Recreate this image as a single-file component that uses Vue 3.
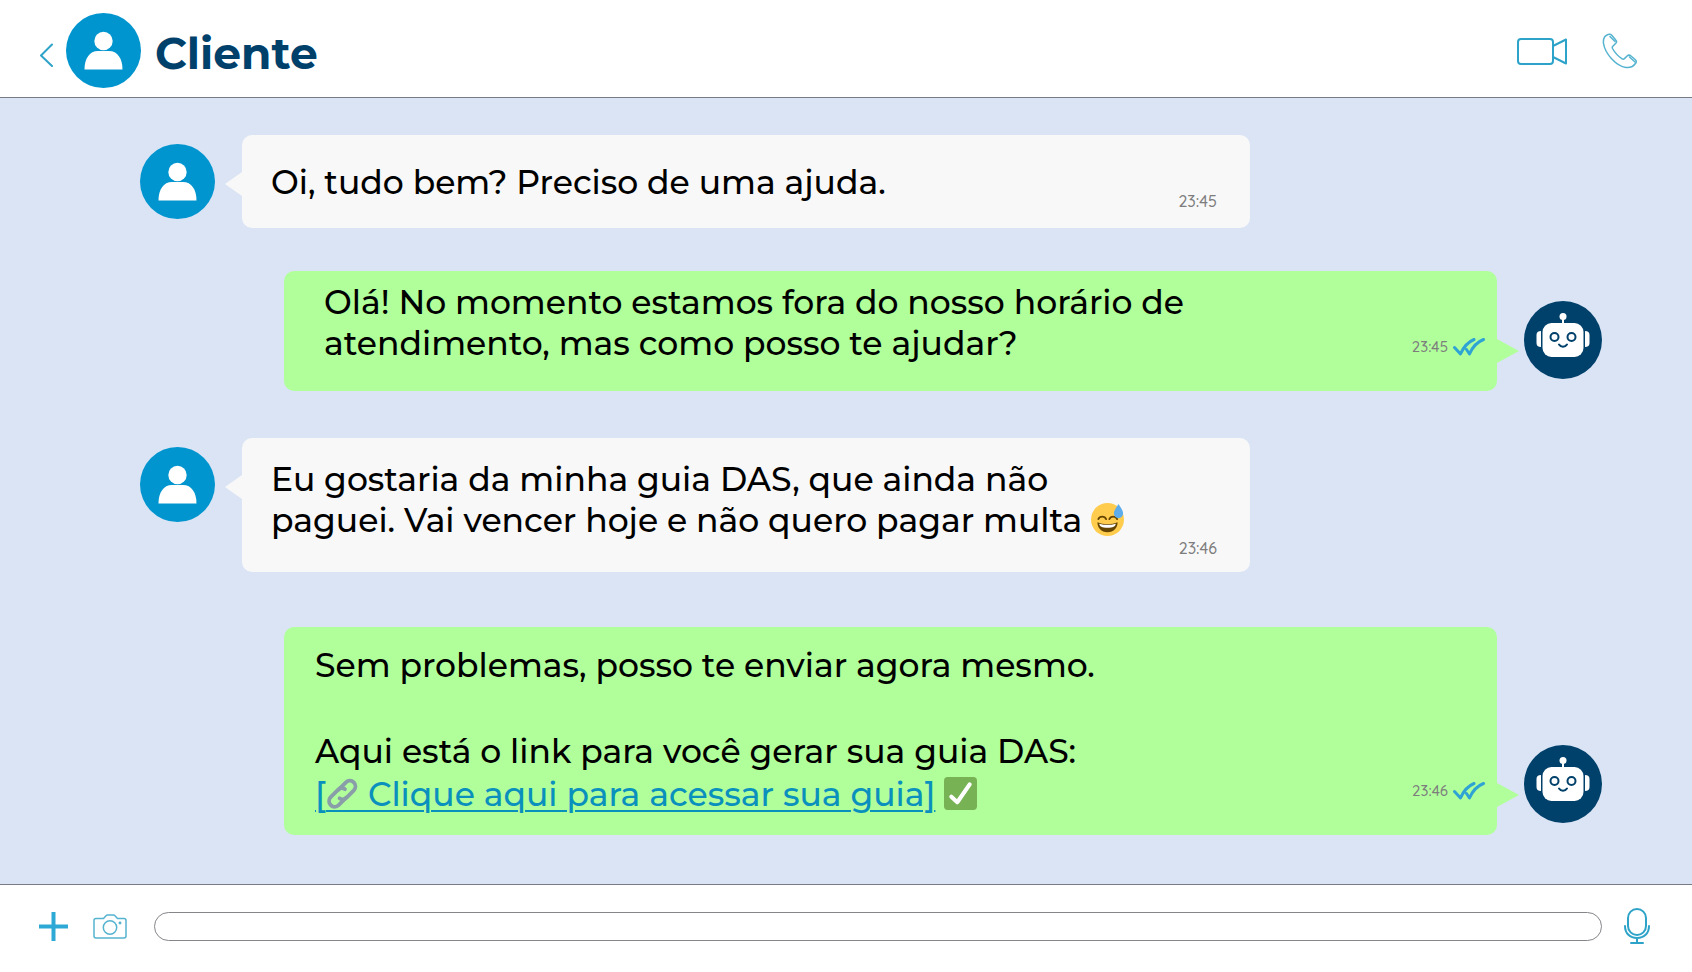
<script setup>
import { ref } from 'vue';

const contact = 'Cliente';
const draft = ref('');

const messages = [
  {
    id: 1,
    from: 'client',
    size: 'single',
    time: '23:45',
    lines: [[{ text: 'Oi, tudo bem? Preciso de uma ajuda.' }]],
  },
  {
    id: 2,
    from: 'bot',
    size: 'double',
    time: '23:45',
    lines: [
      [{ text: 'Olá! No momento estamos fora do nosso horário de' }],
      [{ text: 'atendimento, mas como posso te ajudar?' }],
    ],
  },
  {
    id: 3,
    from: 'client',
    size: 'double',
    time: '23:46',
    lines: [
      [{ text: 'Eu gostaria da minha guia DAS, que ainda não' }],
      [{ text: 'paguei. Vai vencer hoje e não quero pagar multa ' }, { icon: 'sweat' }],
    ],
  },
  {
    id: 4,
    from: 'bot',
    size: 'long',
    time: '23:46',
    lines: [
      [{ text: 'Sem problemas, posso te enviar agora mesmo.' }],
      [],
      [{ text: 'Aqui está o link para você gerar sua guia DAS:' }],
      [{ link: ' Clique aqui para acessar sua guia]' }, { text: ' ' }, { icon: 'check' }],
    ],
  },
];
</script>

<template>
  <div class="app">
    <header class="header">
      <button class="icon-btn back" type="button" aria-label="Voltar">
        <svg width="14" height="24" viewBox="0 0 14 24"><path d="M13 1.500 2 12.500 13 23" /></svg>
      </button>
      <svg class="avatar" viewBox="0 0 75 75" aria-hidden="true">
        <circle cx="37.5" cy="37.5" r="37.5" fill="#0095cf" />
        <circle cx="37.5" cy="28" r="9.2" fill="#fff" />
        <path d="M18.5 56.500c0-11 5-18.500 13.500-18.500h11c8.500 0 13.500 7.500 13.500 18.500z" fill="#fff" />
      </svg>
      <h1 class="title">{{ contact }}</h1>
      <div class="actions">
        <button class="icon-btn" type="button" aria-label="Chamada de vídeo">
          <svg width="50" height="27" viewBox="0 0 50 27">
            <rect x="1" y="1" width="35" height="25" rx="3" />
            <path d="M36 8 49 1.5v24L36 19" />
          </svg>
        </button>
        <button class="icon-btn thin" type="button" aria-label="Ligar">
          <svg width="36" height="36" viewBox="0 0 36 36">
            <path d="M6 1.500C3 2.500 1 6 1.500 10.500c1.500 10 12.500 22.500 22.500 24 4.500.5 7.500-1 9.800-4.500.8-1.200.6-2.300-.4-3.300l-4.400-3.700c-1.200-1-2.800-1-3.900 0l-2.700 2.600c-.7.7-1.500.7-2.300.2C16.500 23.500 12.500 19 10.500 15.500c-.4-.8-.3-1.500.3-2.200l3-3c.9-.9 1-2 .1-3L9.800 2.300C8.800 1.200 7.400 1 6 1.500z" />
            <path d="M8 3.500l5 5M27.500 24l5.500 5" />
          </svg>
        </button>
      </div>
    </header>

    <main class="chat">
      <article v-for="m in messages" :key="m.id" class="message" :class="[m.from, m.size]">
        <svg v-if="m.from === 'client'" class="avatar" viewBox="0 0 75 75" aria-hidden="true">
          <circle cx="37.5" cy="37.5" r="37.5" fill="#0095cf" />
          <circle cx="37.5" cy="28" r="9.2" fill="#fff" />
          <path d="M18.5 56.500c0-11 5-18.500 13.500-18.500h11c8.500 0 13.500 7.500 13.500 18.500z" fill="#fff" />
        </svg>

        <div class="bubble">
          <div class="text">
            <p v-for="(line, i) in m.lines" :key="i" class="line">
              <template v-for="(part, j) in line" :key="j">
                <a v-if="part.link" href="#" class="link">[<span class="clip">&emsp;<svg viewBox="0 0 34 34" aria-hidden="true">
                  <g fill="none" stroke="#899ea8" stroke-width="4" stroke-linecap="round">
                    <path d="M13 13l7.500-7.500a5.800 5.800 0 0 1 8.200 8.200l-7.500 7.500a5.800 5.800 0 0 1-7.200.8" />
                    <path d="M20.500 21.500 13 29a5.800 5.800 0 0 1-8.200-8.200l7.500-7.500a5.800 5.800 0 0 1 7.200-.8" />
                  </g>
                </svg></span>{{ part.link }}</a>
                <svg v-else-if="part.icon === 'sweat'" class="emoji" viewBox="0 0 36 36" role="img" aria-label="😅">
                  <circle cx="18" cy="18" r="18" fill="#ffcc4d" />
                  <path d="M8 17.500c1.500-3.500 7-3.500 8.500 0M20 17.500c1.500-3.500 7-3.500 8.500 0" fill="none" stroke="#664500" stroke-width="2" stroke-linecap="round" />
                  <path d="M7 21c3 1.500 7 2 11 2s8-.5 11-2c0 6-4 11-11 11S7 27 7 21z" fill="#664500" />
                  <path d="M9 22.500c3 1 6 1.300 9 1.300s6-.3 9-1.300c-.3 3-3 4.500-9 4.500s-8.700-1.500-9-4.500z" fill="#fff" />
                  <path d="M30 1c2 3 5 7 5 10.500a5 5 0 0 1-10 0C25 8 28 4 30 1z" fill="#5dadec" />
                </svg>
                <svg v-else-if="part.icon === 'check'" class="emoji" viewBox="0 0 36 36" role="img" aria-label="✅">
                  <rect width="36" height="36" rx="4" fill="#77b255" />
                  <path d="M8 21.500l6.500 6L28 8" fill="none" stroke="#fff" stroke-width="4.5" stroke-linecap="round" stroke-linejoin="round" />
                </svg>
                <span v-else>{{ part.text }}</span>
              </template>
            </p>
          </div>
          <div class="meta">
            <time>{{ m.time }}</time>
            <svg v-if="m.from === 'bot'" class="ticks" viewBox="0 0 32 18" aria-label="Lida">
              <path d="M1.500 9.500 7.500 16C10.500 9 15 4 21 1.500M13.500 11.500l3 4.500C19.500 9 24 4 30.500 1.500" />
            </svg>
          </div>
        </div>

        <svg v-if="m.from === 'bot'" class="avatar" viewBox="0 0 78 78" aria-hidden="true">
          <circle cx="39" cy="39" r="39" fill="#00416b" />
          <g fill="#fff">
            <circle cx="39" cy="15.5" r="3.5" />
            <rect x="38" y="17" width="2" height="7" />
            <rect x="18.5" y="22" width="41" height="34" rx="9" />
            <path d="M17 30v16c-3 0-4.500-1.500-4.500-4v-8c0-2.500 1.500-4 4.500-4zM61 30v16c3 0 4.500-1.500 4.500-4v-8c0-2.500-1.500-4-4.500-4z" />
          </g>
          <g fill="none" stroke="#00416b" stroke-width="2">
            <circle cx="30.5" cy="36" r="4" />
            <circle cx="47.5" cy="36" r="4" />
            <path d="M35 43.500c2 3 6 3 8 0" stroke-linecap="round" />
          </g>
        </svg>
      </article>
    </main>

    <form class="composer" @submit.prevent>
      <button class="icon-btn plus" type="button" aria-label="Anexar">
        <svg width="29" height="29" viewBox="0 0 29 29"><path d="M14.500 0v29M0 14.500h29" /></svg>
      </button>
      <button class="icon-btn thin" type="button" aria-label="Câmera">
        <svg width="34" height="25" viewBox="0 0 34 25">
          <path d="M3 4.500h7.500L13 1.700c.4-.5.8-.7 1.500-.7h6c.7 0 1.100.2 1.500.7l2.500 2.800H31c1.300 0 2 .7 2 2V22c0 1.300-.7 2-2 2H3c-1.300 0-2-.7-2-2V6.500c0-1.300.7-2 2-2z" />
          <circle cx="17" cy="13.5" r="6.7" />
          <circle cx="27" cy="9" r=".7" />
        </svg>
      </button>
      <input v-model="draft" class="draft" type="text" aria-label="Mensagem" />
      <button class="icon-btn mic" type="button" aria-label="Gravar áudio">
        <svg width="26" height="36" viewBox="0 0 26 36">
          <rect x="4" y="1" width="18" height="26" rx="9" />
          <path d="M1 18c0 7.500 5 12 12 12s12-4.500 12-12M13 30v5M7 35h12" />
        </svg>
      </button>
    </form>
  </div>
</template>

<style>
body {
  background: #fff;
}
</style>

<style scoped>
.app {
  display: flex;
  flex-direction: column;
  min-height: 100vh;
  background: #fff;
  color: #000;
  font-family: Montserrat, Inter, "Liberation Sans", sans-serif;
}

.icon-btn {
  display: flex;
  flex: none;
  padding: 0;
  border: none;
  background: none;
  cursor: pointer;
}

.icon-btn svg {
  fill: none;
  stroke: #2ea3c9;
  stroke-width: 2;
  stroke-linecap: round;
  stroke-linejoin: round;
}

.icon-btn.thin svg {
  stroke: #55b3d0;
  stroke-width: 1.5;
}

.avatar {
  flex: none;
  width: 75px;
  height: 75px;
}

/* header */

.header {
  display: flex;
  align-items: center;
  box-sizing: border-box;
  height: 98px;
  padding: 0 54px 0 39px;
  border-bottom: 1px solid #777b86;
}

.header .avatar {
  margin: 4px 14px 0 13px;
}

.back {
  margin-top: 13px;
}

.title {
  margin: 8px 0 0;
  color: #00416b;
  font-size: 44px;
  line-height: 54px;
  font-weight: 700;
}

.actions {
  display: flex;
  align-items: center;
  gap: 35px;
  margin-left: auto;
  margin-top: 5px;
}

/* messages */

.chat {
  flex: 1;
  padding: 37px 90px 49px 140px;
  background: #dbe4f5;
}

.message {
  display: flex;
  align-items: flex-start;
  gap: 27px;
}

.message + .message {
  margin-top: 43px;
}

.message + .message.client {
  margin-top: 47px;
}

.message + .message.long {
  margin-top: 55px;
}

.message.client {
  padding-right: 352px;
}

.message.client .avatar {
  margin-top: 9px;
}

.message.bot {
  align-items: flex-end;
  padding-left: 144px;
}

.message.bot .avatar {
  width: 78px;
  height: 78px;
  margin-bottom: 12px;
}

.bubble {
  position: relative;
  display: flex;
  flex: 1;
  justify-content: space-between;
  min-width: 0;
  border-radius: 10px;
}

.client .bubble {
  padding: 21px 33px 31px 29px;
  background: #f8f8f8;
}

.client.single .bubble {
  padding-top: 27px;
  padding-bottom: 25px;
}

.bot .bubble {
  padding: 11px 12px 27px 40px;
  background: #b1ff9b;
}

.bot.long .bubble {
  padding: 17px 12px 19px 31px;
}

.bubble::after {
  content: "";
  position: absolute;
  border: 12px solid transparent;
}

.client .bubble::after {
  top: 37px;
  right: 100%;
  border-left-width: 0;
  border-right: 17px solid #f8f8f8;
}

.bot .bubble::after {
  bottom: 28px;
  left: 100%;
  border-right-width: 0;
  border-left: 22px solid #b1ff9b;
}

.line {
  min-height: 41px;
  margin: 0;
  font-size: 33px;
  line-height: 41px;
  font-weight: 500;
  white-space: pre-wrap;
}

.long .line {
  min-height: 43px;
  line-height: 43px;
}

.link {
  color: #0a90bd;
  text-decoration: underline;
  text-decoration-thickness: 2px;
  text-underline-offset: 4px;
}

.clip {
  position: relative;
}

.clip svg {
  position: absolute;
  top: 3px;
  left: 0;
  width: 33px;
  height: 33px;
}

.emoji {
  width: 33px;
  height: 33px;
  vertical-align: -4px;
}

.meta {
  display: flex;
  flex: none;
  align-items: center;
  align-self: flex-end;
  gap: 5px;
  height: 20px;
  color: #7d7d7d;
  font-family: Quicksand, Montserrat, Inter, sans-serif;
  font-size: 15px;
  line-height: 20px;
  font-weight: 500;
}

.client .meta {
  margin-bottom: -17px;
  font-size: 16px;
}

.client.single .meta {
  margin-bottom: -8px;
}

.bot .meta {
  margin-bottom: 7px;
}

.bot.long .meta {
  margin-bottom: 15px;
}

.ticks {
  width: 32px;
  height: 18px;
  fill: none;
  stroke: #2ea3d4;
  stroke-width: 3;
  stroke-linecap: round;
  stroke-linejoin: round;
}

/* composer */

.composer {
  display: flex;
  align-items: center;
  box-sizing: border-box;
  height: 88px;
  padding: 0 42px 5px 39px;
  border-top: 1px solid #777b86;
}

.plus {
  margin-right: 25px;
}

.plus svg {
  stroke: #2ea9d6;
  stroke-width: 4;
  stroke-linecap: butt;
}

.draft {
  flex: 1;
  box-sizing: border-box;
  min-width: 0;
  height: 29px;
  margin: 0 22px 0 27px;
  padding: 0 14px;
  border: 1px solid #85858a;
  border-radius: 15px;
  background: #fff;
  font: inherit;
  font-size: 16px;
  outline: none;
}
</style>
